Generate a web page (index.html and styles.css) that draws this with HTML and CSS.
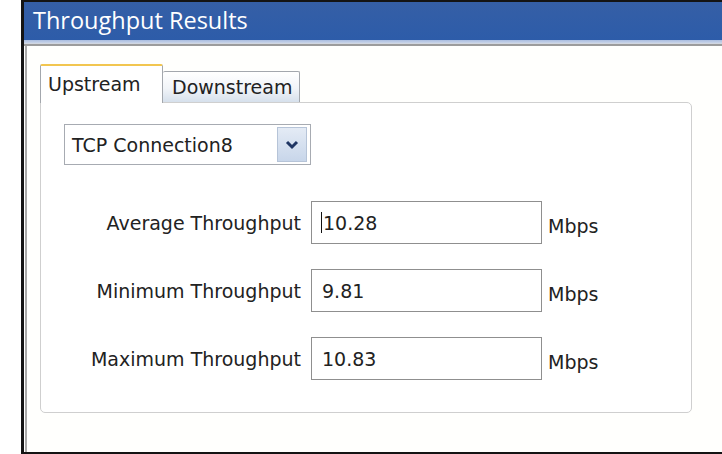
FILE: index.html
```html
<!DOCTYPE html>
<html>
<head>
<meta charset="utf-8">
<title>Throughput Results</title>
<link rel="stylesheet" href="styles.css">
</head>
<body>
<div class="window">
  <div class="titlebar">Throughput Results</div>
  <div class="title-rule"></div>
  <div class="content">
    <div class="tabs">
      <div class="tab tab-active">Upstream</div>
      <div class="tab">Downstream</div>
    </div>
    <div class="panel">
      <div class="select">
        <span class="select-value">TCP Connection8</span>
        <span class="select-button">
          <svg width="14" height="10" viewBox="0 0 14 10"><path d="M2 2 L7 7 L12 2" fill="none" stroke="#1f3563" stroke-width="3"/></svg>
        </span>
      </div>
      <div class="stats">
        <div class="stat-label">Average Throughput</div>
        <div class="stat-field"><span class="caret"></span>10.28</div>
        <div class="stat-unit">Mbps</div>

        <div class="stat-label">Minimum Throughput</div>
        <div class="stat-field">9.81</div>
        <div class="stat-unit">Mbps</div>

        <div class="stat-label">Maximum Throughput</div>
        <div class="stat-field">10.83</div>
        <div class="stat-unit">Mbps</div>
      </div>
    </div>
  </div>
</div>
</body>
</html>
```

FILE: styles.css
```css
html, body {
  margin: 0;
  padding: 0;
  background: #ffffff;
  overflow: hidden;
}

.window {
  margin-left: 21px;
  height: 454px;
  box-sizing: border-box;
  border-left: 3px solid #141414;
  border-top: 2px solid #141414;
  border-bottom: 2px solid #141414;
  display: flex;
  flex-direction: column;
  font-family: "DejaVu Sans", sans-serif;
  font-size: 19px;
  color: #222;
}

.titlebar {
  height: 38px;
  box-sizing: border-box;
  padding-left: 9px;
  background: linear-gradient(#355fa6, #2d5ca9);
  color: #ffffff;
  font-family: "Open Sans", sans-serif;
  font-size: 23.5px;
  line-height: 36px;
}

.title-rule {
  height: 6px;
  background: linear-gradient(#a9bde0 0, #c9d4e8 3px, #d8d8d8 4px, #9c9c9c 4px, #9c9c9c 6px);
}

.content {
  flex: 1;
  margin-left: 1px;
  border-left: 2px solid #a9a9a9;
  background: #fffffd;
  padding: 18px 0 0 13px;
  display: flex;
  flex-direction: column;
}

.tabs {
  display: flex;
  align-items: flex-end;
  height: 38px;
  position: relative;
  z-index: 1;
}

.tab {
  box-sizing: border-box;
  height: 31px;
  padding: 0 0 0 9px;
  border: 1px solid #a3a7ad;
  border-bottom: none;
  border-radius: 2px 2px 0 0;
  background: linear-gradient(#ffffff, #f1f4f8 55%, #d6e0ec);
  line-height: 30px;
  color: #222;
  white-space: nowrap;
}

.tab-active {
  width: 123px;
  height: 39px;
  padding-left: 7px;
  border-top: 2px solid #f2c650;
  background: #ffffff;
  line-height: 36px;
  margin-bottom: -1px;
}

.tab + .tab {
  width: 137px;
  border-left: none;
}

.panel {
  box-sizing: border-box;
  width: 652px;
  height: 311px;
  border: 1px solid #cfcfcf;
  border-radius: 0 5px 5px 5px;
  background: #ffffff;
  padding: 21px 0 0 23px;
}

.select {
  box-sizing: border-box;
  width: 247px;
  height: 41px;
  border: 1px solid #a7abb2;
  display: flex;
  align-items: center;
  padding: 2px 3px 2px 7px;
}

.select-value {
  flex: 1;
  white-space: nowrap;
}

.select-button {
  width: 30px;
  height: 35px;
  box-sizing: border-box;
  border: 1px solid #b6c4d8;
  background: linear-gradient(#e4ebf5, #c8d6ea);
  display: flex;
  align-items: center;
  justify-content: center;
}

.stats {
  margin-top: 36px;
  display: grid;
  grid-template-columns: 237px 231px auto;
  column-gap: 10px;
  row-gap: 25px;
  align-items: center;
}

.stat-label {
  text-align: right;
  white-space: nowrap;
}

.stat-field {
  height: 43px;
  box-sizing: border-box;
  border: 1px solid #8f8f8f;
  padding-left: 10px;
  line-height: 40px;
  display: flex;
  align-items: center;
}

.caret {
  width: 1px;
  height: 21px;
  background: #111;
  margin-left: -1px;
  margin-right: 1px;
}

.stat-unit {
  padding-top: 6px;
  margin-left: -4px;
}
```
